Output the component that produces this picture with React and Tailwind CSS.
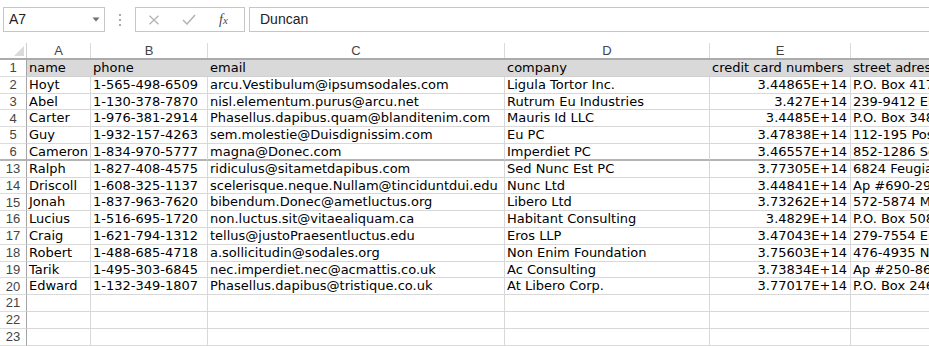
import React from "react";

const colW = ["w-[64px]", "w-[117px]", "w-[297px]", "w-[205px]", "w-[141px]", "w-[300px]"];
const letters = ["A", "B", "C", "D", "E", "F"];

const rows = [
  ["2", "Hoyt", "1-565-498-6509", "arcu.Vestibulum@ipsumsodales.com", "Ligula Tortor Inc.", "3.44865E+14", "P.O. Box 417, 8463 Eget Av."],
  ["3", "Abel", "1-130-378-7870", "nisl.elementum.purus@arcu.net", "Rutrum Eu Industries", "3.427E+14", "239-9412 Elit Av."],
  ["4", "Carter", "1-976-381-2914", "Phasellus.dapibus.quam@blanditenim.com", "Mauris Id LLC", "3.4485E+14", "P.O. Box 348, 4710 Ut St."],
  ["5", "Guy", "1-932-157-4263", "sem.molestie@Duisdignissim.com", "Eu PC", "3.47838E+14", "112-195 Posuere Rd."],
  ["6", "Cameron", "1-834-970-5777", "magna@Donec.com", "Imperdiet PC", "3.46557E+14", "852-1286 Sed St."],
  ["13", "Ralph", "1-827-408-4575", "ridiculus@sitametdapibus.com", "Sed Nunc Est PC", "3.77305E+14", "6824 Feugiat Road"],
  ["14", "Driscoll", "1-608-325-1137", "scelerisque.neque.Nullam@tinciduntdui.edu", "Nunc Ltd", "3.44841E+14", "Ap #690-2963 Sit Av."],
  ["15", "Jonah", "1-837-963-7620", "bibendum.Donec@ametluctus.org", "Libero Ltd", "3.73262E+14", "572-5874 Mauris Rd."],
  ["16", "Lucius", "1-516-695-1720", "non.luctus.sit@vitaealiquam.ca", "Habitant Consulting", "3.4829E+14", "P.O. Box 508, 7725 In Rd."],
  ["17", "Craig", "1-621-794-1312", "tellus@justoPraesentluctus.edu", "Eros LLP", "3.47043E+14", "279-7554 Erat Street"],
  ["18", "Robert", "1-488-685-4718", "a.sollicitudin@sodales.org", "Non Enim Foundation", "3.75603E+14", "476-4935 Nec Rd."],
  ["19", "Tarik", "1-495-303-6845", "nec.imperdiet.nec@acmattis.co.uk", "Ac Consulting", "3.73834E+14", "Ap #250-8613 Nunc St."],
  ["20", "Edward", "1-132-349-1807", "Phasellus.dapibus@tristique.co.uk", "At Libero Corp.", "3.77017E+14", "P.O. Box 246, 5320 Ac Rd."],
  ["21", "", "", "", "", "", ""],
  ["22", "", "", "", "", "", ""],
  ["23", "", "", "", "", "", ""],
];

const cellFont = { };

function RowNum({ n, extra }) {
  return (
    <div
      className={`w-[27px] shrink-0 flex items-center justify-center border-r border-r-[#a6a6a6] text-[13px] text-[#444444] ${extra}`}
      style={{ fontFamily: '"Liberation Sans", Arial, sans-serif' }}
    >
      {n}
    </div>
  );
}

export default function App() {
  return (
    <div className="w-[929px] h-[346px] overflow-hidden bg-white relative">
      {/* formula bar */}
      <div
        className="h-[43px] flex items-start pt-[7px] pl-[3px]"
        style={{ fontFamily: '"Liberation Sans", Arial, sans-serif' }}
      >
        <div className="w-[102px] h-[25px] shrink-0 border border-[#c6c6c6] flex items-center justify-between pl-[5px] pr-[4px]">
          <span className="text-[14px] text-[#222222]">A7</span>
          <svg width="8" height="5" viewBox="0 0 8 5">
            <polygon points="0.5,0.5 7.5,0.5 4,4.5" fill="#6e6e6e" />
          </svg>
        </div>
        <div className="w-[30px] h-[25px] shrink-0 flex flex-col items-center justify-center gap-[3px]">
          <div className="w-[2px] h-[2px] bg-[#a8a8a8]" />
          <div className="w-[2px] h-[2px] bg-[#a8a8a8]" />
          <div className="w-[2px] h-[2px] bg-[#a8a8a8]" />
        </div>
        <div className="w-[110px] h-[25px] shrink-0 border border-[#c6c6c6] flex items-center">
          <svg className="ml-[12px]" width="12" height="10" viewBox="0 0 12 10">
            <path d="M1.5 0.8 L10.5 9.2 M10.5 0.8 L1.5 9.2" stroke="#b3b3b3" strokeWidth="1.3" fill="none" />
          </svg>
          <svg className="ml-[22px]" width="14" height="11" viewBox="0 0 14 11">
            <path d="M1 6 L5 10 L13 1" stroke="#b3b3b3" strokeWidth="1.5" fill="none" />
          </svg>
          <span
            className="ml-[23px] text-[14px] italic text-[#4a4a4a] leading-none"
            style={{ fontFamily: '"Liberation Serif", "Times New Roman", serif' }}
          >
            f<span className="text-[11px]">x</span>
          </span>
        </div>
        <div className="flex-1 h-[25px] ml-[4px] border border-r-0 border-[#c6c6c6] flex items-center pl-[10px]">
          <span className="text-[14px] text-[#222222]">Duncan</span>
        </div>
      </div>

      {/* column header */}
      <div
        className="h-[17px] flex border-b-2 border-b-[#ababab]"
        style={{ fontFamily: '"Liberation Sans", Arial, sans-serif' }}
      >
        <div className="w-[27px] shrink-0 border-r border-r-[#d0d0d0] flex items-end justify-end pr-[2px] pb-[2px]">
          <svg width="10" height="10" viewBox="0 0 10 10">
            <polygon points="0,10 10,10 10,0" fill="#dadada" />
          </svg>
        </div>
        {letters.map((l, i) => (
          <div
            key={l}
            className={`${colW[i]} shrink-0 border-r border-r-[#dadada] flex items-center justify-center text-[13px] text-[#444444]`}
          >
            {l}
          </div>
        ))}
      </div>

      {/* row 1 (header row, filled) */}
      <div className="h-[16.8px] flex">
        <RowNum n="1" extra="border-b border-b-[#dcdcdc]" />
        {["name", "phone", "email", "company", "credit card numbers", "street adress"].map((t, i) => (
          <div
            key={i}
            className={`${colW[i]} shrink-0 bg-[#d9d9d9] border-b border-b-[#d0d0d0] pl-[2px] whitespace-nowrap overflow-hidden text-[13px] leading-[15px] text-black`}
            style={{ fontFamily: '"DejaVu Sans", Verdana, sans-serif' }}
          >
            {t}
          </div>
        ))}
      </div>

      {rows.map((r) => {
        const sep = r[0] === "6";
        const bb = sep ? "border-b-2 border-b-[#b4b4b4]" : "border-b border-b-[#d8d8d8]";
        return (
          <div key={r[0]} className="h-[16.8px] flex">
            <RowNum n={r[0]} extra={sep ? "border-b-2 border-b-[#b4b4b4]" : "border-b border-b-[#dcdcdc]"} />
            {r.slice(1).map((t, i) => (
              <div
                key={i}
                className={`${colW[i]} shrink-0 border-r border-r-[#d8d8d8] ${bb} whitespace-nowrap overflow-hidden text-[13px] leading-[15px] text-black ${i === 4 ? "text-right pr-[3px]" : "pl-[2px]"}`}
                style={{ fontFamily: '"DejaVu Sans", Verdana, sans-serif' }}
              >
                {t}
              </div>
            ))}
          </div>
        );
      })}
    </div>
  );
}
